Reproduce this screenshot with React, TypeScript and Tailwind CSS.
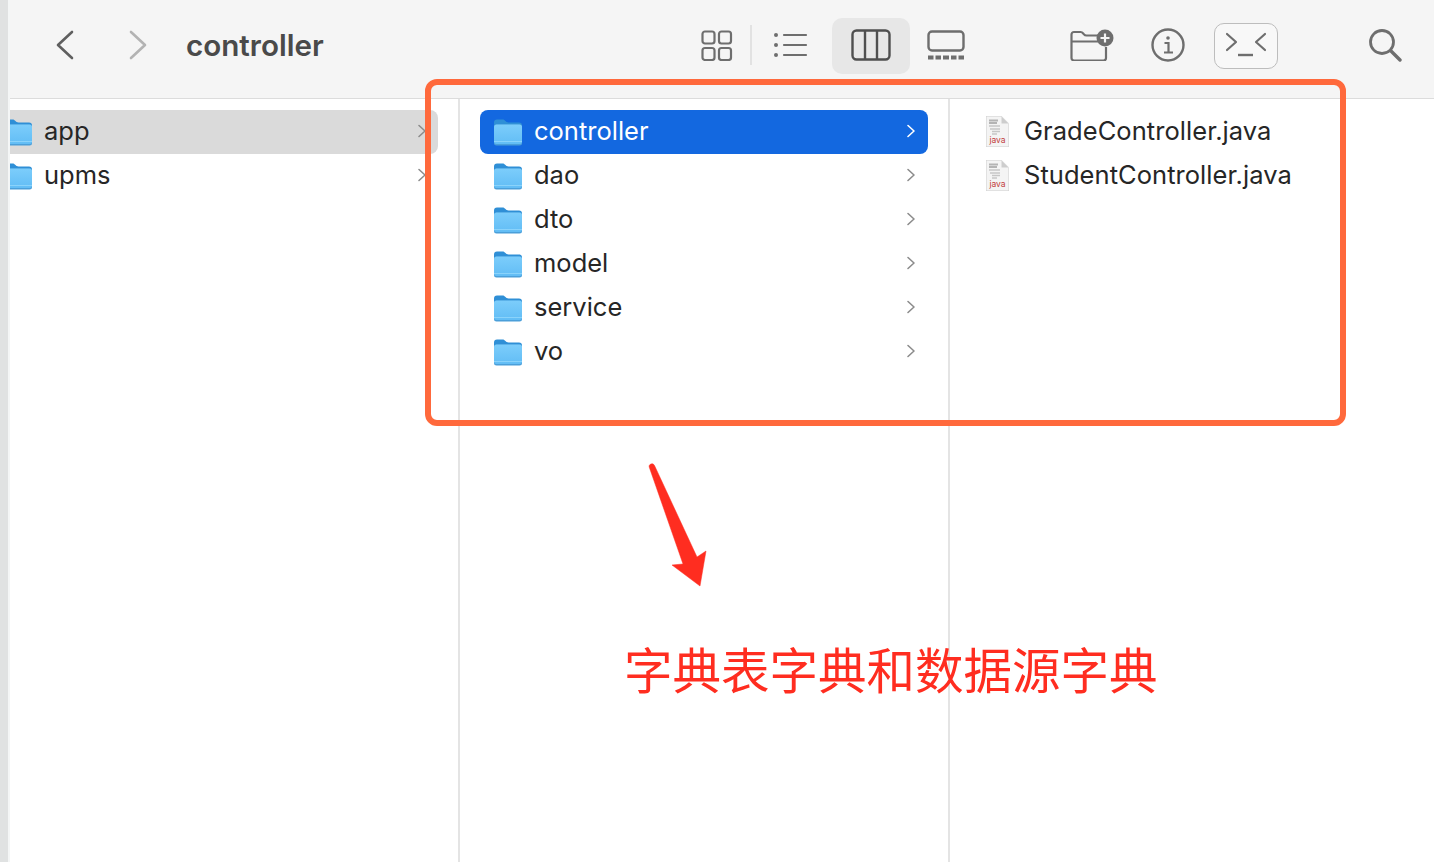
import { useId } from "react";

function Folder({ clip = false }: { clip?: boolean }) {
  const id = useId();
  return (
    <svg width="30" height="28" viewBox="0 0 30 28" className={clip ? "mb-[1px] ml-[-7px] shrink-0" : "mb-[1px] shrink-0"}>
      <defs>
        <linearGradient id={id} x1="0" y1="0" x2="0" y2="1">
          <stop offset="0" stopColor="#7ccdfb" />
          <stop offset="1" stopColor="#62bdf5" />
        </linearGradient>
      </defs>
      <path d="M1 4.500C1 2.500 2 1.500 4 1.500h5.500c1.500 0 2 .5 3 1.600 1 1 1.500 1.400 3 1.400H26c2 0 3 1 3 3V12H1z" fill="#2f8fd6" />
      <rect x="1" y="6.500" width="28" height="21" rx="2.500" fill="#4b9fd9" />
      <rect x="1" y="6.500" width="28" height="19.500" rx="2.500" fill={`url(#${id})`} />
      <rect x="1" y="23" width="28" height="1" fill="#8ad3fb" />
    </svg>
  );
}

function Chevron({ color = "#8c8c8c" }: { color?: string }) {
  return (
    <svg className="mb-[2px]" width="10" height="14" viewBox="0 0 10 14" fill="none" stroke={color} strokeWidth="1.600" strokeLinecap="round" strokeLinejoin="round">
      <path d="M2 1.500 8 7l-6 5.500" />
    </svg>
  );
}

function JavaFile() {
  return (
    <svg className="mb-[1px] shrink-0" width="26" height="33" viewBox="0 0 26 33">
      <path d="M2 1h15.500L25 8.500V32H2z" fill="#cfcfcf" />
      <path d="M2.500 1.500h15l7 7v23h-22z" fill="#f4f4f4" />
      <path d="M17.500 1.500v7h7z" fill="#cdcdcd" />
      <path d="M5 5.500h9M5 8h8" stroke="#b4b4b4" strokeWidth="2.200" />
      <path d="M5 11h11M6 14h10M8 16.500h8M8 19h5" stroke="#c6c6c6" strokeWidth="1.400" />
      <text x="13.500" y="28" textAnchor="middle" fontSize="8.500" fill="#c23a3a" fontFamily="Inter, sans-serif">
        java
      </text>
    </svg>
  );
}

function FolderRow({ name, active }: { name: string; active?: boolean }) {
  return (
    <div className={`flex h-11 items-center rounded-[8px] pl-[13px] pr-[12px] ${active ? "bg-[#1368e0] text-white" : "text-[#262626]"}`}>
      <Folder />
      <span className="mb-[2px] ml-[11px] flex-1">{name}</span>
      <Chevron color={active ? "#ffffff" : "#8c8c8c"} />
    </div>
  );
}

function SideRow({ name, active }: { name: string; active?: boolean }) {
  return (
    <div className={`flex h-11 items-center rounded-r-[8px] pr-[11px] text-[#262626] ${active ? "bg-[#dadada]" : ""}`}>
      <Folder clip />
      <span className="mb-[2px] ml-[11px] flex-1">{name}</span>
      <Chevron />
    </div>
  );
}

function Toolbar() {
  const ic = "#6e6e6e";
  return (
    <div className="flex h-[99px] shrink-0 items-center border-b border-[#dcdcdc] bg-[#f5f5f5] pb-[6px] pr-[32px]">
      <svg className="mb-[2px] ml-[46px]" width="18" height="30" viewBox="0 0 18 30" fill="none" stroke="#5f5f5f" strokeWidth="2.600" strokeLinecap="round" strokeLinejoin="round">
        <path d="M16 2 2 15l14 13" />
      </svg>
      <svg className="mb-[2px] ml-[55px]" width="18" height="30" viewBox="0 0 18 30" fill="none" stroke="#b3b3b3" strokeWidth="2.600" strokeLinecap="round" strokeLinejoin="round">
        <path d="m2 2 14 13L2 28" />
      </svg>
      <span className="ml-[39px] flex-1 text-[29.600px] font-semibold leading-none text-[#4a4a4a]">controller</span>

      <svg className="mb-[2px]" width="32" height="31" viewBox="0 0 32 31" fill="none" stroke={ic} strokeWidth="2.200">
        <rect x="1.500" y="1.500" width="12" height="12" rx="2.500" />
        <rect x="18" y="1.500" width="12" height="12" rx="2.500" />
        <rect x="1.500" y="18" width="12" height="12" rx="2.500" />
        <rect x="18" y="18" width="12" height="12" rx="2.500" />
      </svg>
      <div className="mb-[2px] ml-[17px] h-[40px] w-[2px] bg-[#e2e2e2]" />
      <svg className="mb-[2px] ml-[21px]" width="35" height="28" viewBox="0 0 35 28" fill="none" stroke={ic} strokeWidth="2.200" strokeLinecap="round">
        <circle cx="3" cy="4" r="2" fill={ic} stroke="none" />
        <circle cx="3" cy="14" r="2" fill={ic} stroke="none" />
        <circle cx="3" cy="24" r="2" fill={ic} stroke="none" />
        <path d="M11 4h22M11 14h22M11 24h22" />
      </svg>
      <div className="ml-[24px] flex h-[56px] w-[78px] items-center justify-center rounded-[10px] bg-[#e7e7e7]">
        <svg className="mb-[2px]" width="40" height="32" viewBox="0 0 40 32" fill="none" stroke="#4f4f4f" strokeWidth="2.400">
          <rect x="1.500" y="1.500" width="37" height="29" rx="4" />
          <path d="M14 2v28M26 2v28" />
        </svg>
      </div>
      <svg className="mb-[2px] ml-[17px]" width="38" height="30" viewBox="0 0 38 30" fill="none" stroke={ic} strokeWidth="2.400">
        <rect x="1.500" y="1.500" width="35" height="19" rx="3.500" />
        <path d="M1 27.500h5.500M8.500 27.500h5.500M16 27.500h6M24 27.500h5.500M31.500 27.500H37" strokeWidth="4" />
      </svg>

      <svg className="mb-[2px] ml-[105px]" width="44" height="32" viewBox="0 0 44 32" fill="none" stroke={ic} strokeWidth="2.200" strokeLinejoin="round">
        <path d="M1.500 29V5.500c0-1.500 1-2.500 2.500-2.500h6.500c1.500 0 2 .6 3 1.800 1 1.100 1.500 1.700 3 1.700H28M1.500 12.500H28M36 18v11c0 1.500-1 2.500-2.500 2.500H4c-1.500 0-2.500-1-2.500-2.500" />
        <circle cx="35" cy="9" r="8.500" fill={ic} stroke="none" />
        <path d="M35 4.500v9M30.500 9h9" stroke="#f5f5f5" strokeWidth="2.200" />
      </svg>
      <svg className="mb-[2px] ml-[37px]" width="34" height="34" viewBox="0 0 34 34" fill="none" stroke={ic} strokeWidth="2.400">
        <circle cx="17" cy="17" r="15.500" />
        <circle cx="17" cy="10" r="1.800" fill={ic} stroke="none" />
        <path d="M13.500 15H17.500V24M13 24.500h9" strokeWidth="2.200" />
      </svg>
      <div className="ml-[29px] flex h-[46px] w-[64px] items-center justify-center rounded-[10px] border border-[#bdbdbd] bg-[#f8f8f8]">
        <svg width="42" height="30" viewBox="0 0 42 30" fill="none" stroke={ic} strokeWidth="2.200" strokeLinecap="round" strokeLinejoin="round">
          <path d="m2 3 9 8-9 8M40 3l-9 8 9 8" />
          <path d="M13 24h15" strokeLinecap="butt" strokeWidth="2.400" />
        </svg>
      </div>
      <svg className="mb-[2px] ml-[90px]" width="34" height="34" viewBox="0 0 34 34" fill="none" stroke={ic} strokeWidth="2.800" strokeLinecap="round">
        <circle cx="14" cy="14" r="11.500" />
        <path d="m23 23 9 9" strokeWidth="3.400" />
      </svg>
    </div>
  );
}

export default function App() {
  return (
    <div className="relative flex h-[862px] w-[1434px] overflow-hidden bg-white font-['Inter','Noto_Sans_CJK_SC',sans-serif] text-[25.500px]">
      <div className="w-2 shrink-0 bg-[#e0e2e2]" />
      <div className="w-[2px] shrink-0 bg-[#f4f6f6]" />
      <div className="flex min-w-0 flex-1 flex-col">
        <Toolbar />
        <div className="flex min-h-0 flex-1">
          <div className="w-[448px] shrink-0 overflow-hidden pt-[11px] pr-[20px]">
            <SideRow name="app" active />
            <SideRow name="upms" />
          </div>
          <div className="w-[492px] shrink-0 border-x-2 border-[#e4e4e4] pl-5 pr-5 pt-[11px]">
            <FolderRow name="controller" active />
            <FolderRow name="dao" />
            <FolderRow name="dto" />
            <FolderRow name="model" />
            <FolderRow name="service" />
            <FolderRow name="vo" />
          </div>
          <div className="min-w-0 flex-1 pl-[34px] pt-[11px] text-[#262626]">
            <div className="flex h-11 items-center gap-[14px]">
              <JavaFile />
              <span className="mb-[2px] tracking-[0.05px]">GradeController.java</span>
            </div>
            <div className="flex h-11 items-center gap-[14px]">
              <JavaFile />
              <span className="mb-[2px] tracking-[0.05px]">StudentController.java</span>
            </div>
          </div>
        </div>
      </div>

      {/* annotations drawn over the screenshot */}
      <div className="absolute left-[425px] top-[79px] h-[347px] w-[921px] rounded-[12px] border-[6px] border-[#ff693c]" />
      <svg className="absolute left-[640px] top-[455px]" width="80" height="140" viewBox="640 455 80 140">
        <path d="M649.200 467c-.8-3 4-4.500 5.300-1.500L697 557l9-6-6 35-28-21 11-1z" fill="#ff2d20" stroke="#ff2d20" strokeWidth="0.500" />
      </svg>
      <div className="absolute left-[624px] top-[636px] whitespace-nowrap text-[48.500px] leading-[72px] text-[#ff2d20]">字典表字典和数据源字典</div>
    </div>
  );
}
